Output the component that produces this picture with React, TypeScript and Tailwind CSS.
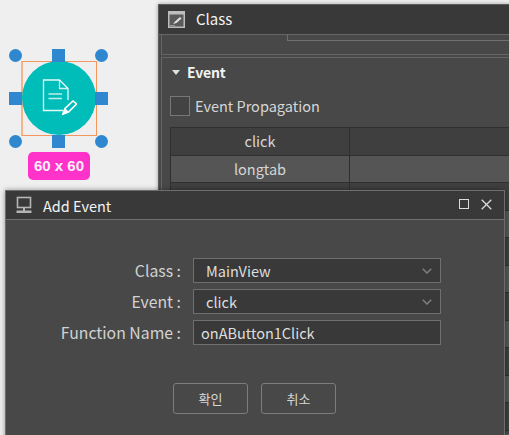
import React from "react";

const font = { fontFamily: '"Noto Sans CJK KR", "Noto Sans", sans-serif' };

function Handle({ cls }: { cls: string }) {
  return <div className={"absolute bg-[#2f87cf] " + cls} />;
}

function Widget() {
  return (
    <div className="absolute left-[9px] top-[49px] w-[99px] h-[131px]">
      <div className="absolute left-[12px] top-[12px] w-[76px] h-[75px] border border-[#f4975f] border-l-[2px] border-l-[#f5b48c]" />
      <div className="absolute left-[13px] top-[12px] w-[74px] h-[74px] rounded-full bg-[#00bdb9] flex items-center justify-center">
        <svg width="36" height="40" viewBox="0 0 36 40" fill="none" stroke="#ffffff" strokeWidth="1.3" className="mt-[2px]">
          <path d="M22 31.5H2.5V1H18.5L27 9.5V21" strokeOpacity="0.9" />
          <path d="M18.5 1V9.5H27" strokeOpacity="0.8" />
          <path d="M7.5 15H21M7.5 19.5H21" strokeOpacity="0.75" />
          <path d="M22 35L24 29.5L32 22L35.5 25L27.5 33Z" strokeWidth="1.6" />
          <path d="M22 35L24 30L27 33Z" fill="#ffffff" />
        </svg>
      </div>
      <Handle cls="left-0 top-0 w-[13px] h-[13px] rounded-full" />
      <Handle cls="left-[43px] top-0 w-[13px] h-[13px]" />
      <Handle cls="left-[86px] top-0 w-[13px] h-[13px] rounded-full" />
      <Handle cls="left-0 top-[43px] w-[13px] h-[13px]" />
      <Handle cls="left-[86px] top-[43px] w-[13px] h-[13px]" />
      <Handle cls="left-0 top-[86px] w-[13px] h-[13px] rounded-full" />
      <Handle cls="left-[43px] top-[86px] w-[13px] h-[13px]" />
      <Handle cls="left-[86px] top-[86px] w-[13px] h-[13px] rounded-full" />
      <div
        className="absolute left-[19px] top-[103px] w-[62px] h-[28px] rounded-[5px] bg-[#ff33c9] text-[#fdf0fa] font-bold text-[15px] leading-[27px] text-center"
        style={{ fontFamily: '"Liberation Sans", sans-serif' }}
      >
        60 x 60
      </div>
    </div>
  );
}

function ClassWindow() {
  const rows = ["click", "longtab", "", "", "", "", "", "", "", "", ""];
  return (
    <div className="absolute left-[158px] top-[4px] w-[360px] h-[431px] border border-[#5e5e5e] border-r-0 bg-[#484848] overflow-hidden flex flex-col shadow-[0_0_4px_rgba(0,0,0,0.35)]">
      <div className="h-[30px] shrink-0 bg-[#393939] border-b border-[#666] flex items-center pl-[9px] gap-[11px]">
        <svg width="17" height="17" viewBox="0 0 17 17">
          <rect x="0" y="0" width="17" height="17" fill="#bdbdbd" />
          <rect x="1.5" y="3.5" width="14" height="12" fill="#5a5a5a" />
          <path d="M5 13L7 10.5L12 6L13.5 7.5L8.5 12Z" fill="#e0e0e0" />
          <path d="M2 14.5H7" stroke="#999" />
        </svg>
        <span className="text-[15px] text-[#f2f2f2]">Class</span>
      </div>
      <div className="h-[20px] shrink-0 ml-[2px] border-l border-b border-[#666] pl-[125px]">
        <div className="w-[230px] h-[6px] border-l border-b border-[#6f6f6f] overflow-hidden">
          <div className="-mt-[21px] ml-[24px] text-[14.5px] leading-[22px] text-[#d6d6d6] tracking-[1px]">(None)</div>
        </div>
      </div>
      <div className="mt-[2px] ml-[2px] flex-1 border-l border-t border-[#666] pl-[8px]">
        <div className="h-[27px] flex items-center gap-[7px] pt-[1px]">
          <div className="w-0 h-0 ml-[2px] border-l-[4.5px] border-r-[4.5px] border-t-[5px] border-l-transparent border-r-transparent border-t-[#e0e0e0]" />
          <span className="text-[14px] font-bold tracking-[-0.2px] text-[#f2f2f2]">Event</span>
        </div>
        <div className="h-[20px] mt-[11px] flex items-center gap-[5px]">
          <div className="w-[20px] h-[20px] border border-[#777] bg-[#434343]" />
          <span className="text-[14.5px] leading-[18px] text-[#d6d6d6]">Event Propagation</span>
        </div>
        <div className="mt-[11px] border-t border-l border-[#2f2f2f]">
          {rows.map((r, i) => (
            <div
              key={i}
              className={
                "h-[27.5px] flex border-b border-[#2f2f2f] " +
                (i % 2 === 0 ? "bg-[#3f3f3f]" : "bg-[#555555]")
              }
            >
              <div className="w-[179px] border-r border-[#2f2f2f] text-center text-[14.5px] leading-[25px] text-[#d6d6d6]">
                {r}
              </div>
              <div className="flex-1" />
            </div>
          ))}
        </div>
      </div>
    </div>
  );
}

function Chevron() {
  return (
    <svg width="10" height="6" viewBox="0 0 10 6" fill="none" stroke="#7d7d7d" strokeWidth="1.6" className="ml-auto mr-[8px]">
      <path d="M0.8 0.8L5 5L9.2 0.8" />
    </svg>
  );
}

function Field({ label, value, select }: { label: string; value: string; select?: boolean }) {
  return (
    <div className="flex items-center h-[25px]">
      <div className="w-[175px] text-right text-[15.8px] leading-[20px] text-[#d2d2d2]">{label}</div>
      <div className="ml-[12px] w-[248px] h-[25px] bg-[#393939] border border-[#6f6f6f] flex items-center pl-[7px] text-[14.5px] text-[#dedede]">
        <span className={select ? "ml-[5px]" : ""}>{value}</span>
        {select && <Chevron />}
      </div>
    </div>
  );
}

function Dialog() {
  return (
    <div className="absolute left-[5px] top-[190px] w-[500px] h-[260px] border border-[#6e6e6e] bg-[#484848] flex flex-col shadow-[0_0_5px_rgba(0,0,0,0.4)]">
      <div className="h-[29px] shrink-0 bg-[#393939] border-b border-[#6e6e6e] flex items-center">
        <svg width="17" height="18" viewBox="0 0 17 18" fill="none" className="ml-[10px] mb-[1px]">
          <rect x="1.5" y="1.5" width="13" height="10" stroke="#b5b5b5" strokeWidth="1.6" />
          <path d="M8 12V15" stroke="#b5b5b5" strokeWidth="2" />
          <rect x="0.5" y="14.5" width="15" height="2.5" fill="#b5b5b5" />
        </svg>
        <span className="ml-[10px] mt-[1px] text-[14.5px] text-[#f2f2f2]">Add Event</span>
        <div className="ml-auto flex items-center mr-[12px] gap-[12px] mb-[2px]">
          <div className="w-[10px] h-[10px] border-[1.5px] border-[#dcdcdc]" />
          <svg width="11" height="11" viewBox="0 0 11 11" stroke="#dcdcdc" strokeWidth="1.3">
            <path d="M0.7 0.7L10.3 10.3M10.3 0.7L0.7 10.3" />
          </svg>
        </div>
      </div>
      <div className="pt-[38px] flex flex-col gap-[6px]">
        <Field label="Class :" value="MainView" select />
        <Field label="Event :" value="click" select />
        <Field label="Function Name :" value="onAButton1Click" />
      </div>
      <div className="mt-[38px] ml-[167px] flex gap-[13px]">
        <button className="w-[75px] h-[31px] rounded-[3px] border border-[#7d7d7d] text-[13px] text-[#d6d6d6]">확인</button>
        <button className="w-[75px] h-[31px] rounded-[3px] border border-[#7d7d7d] text-[13px] text-[#d6d6d6]">취소</button>
      </div>
    </div>
  );
}

export default function App() {
  return (
    <div className="relative w-[509px] h-[435px] overflow-hidden bg-[#efefef]" style={font}>
      <Widget />
      <ClassWindow />
      <Dialog />
    </div>
  );
}
